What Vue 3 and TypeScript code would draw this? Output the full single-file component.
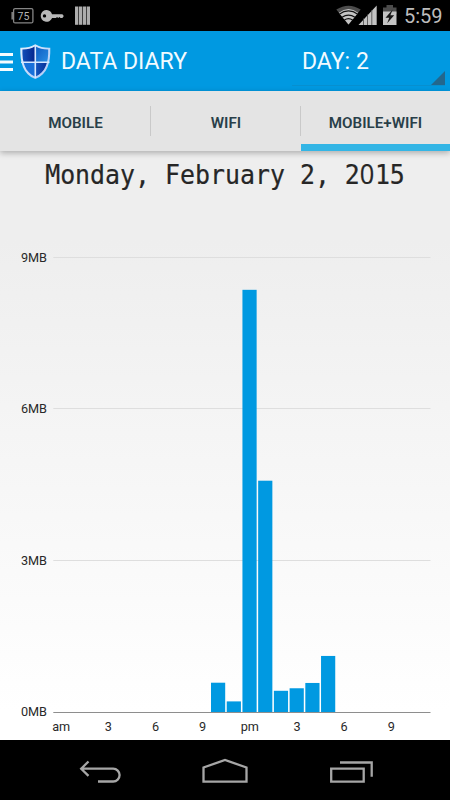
<script setup lang="ts">
interface Bar { hour: number; mb: number }

const tabs: string[] = ['MOBILE', 'WIFI', 'MOBILE+WIFI']
const activeTab = 'MOBILE+WIFI'

const bars: Bar[] = [
  { hour: 10, mb: 0.58 },
  { hour: 11, mb: 0.21 },
  { hour: 12, mb: 8.36 },
  { hour: 13, mb: 4.58 },
  { hour: 14, mb: 0.42 },
  { hour: 15, mb: 0.47 },
  { hour: 16, mb: 0.575 },
  { hour: 17, mb: 1.11 },
]
const hourLabels: string[] = ['am', '3', '6', '9', 'pm', '3', '6', '9']
const gridValues: number[] = [9, 6, 3, 0]

const left = 53.3
const hourWidth = 15.72
const base = 512
const yFor = (mb: number): number => base - mb * 50.5
const lineY = (mb: number): number => mb === 0 ? base + 0.5 : Math.ceil(yFor(mb)) - 0.5
</script>

<template>
  <div class="screen">
    <div class="status">
      <svg class="status-left" width="100" height="31" viewBox="0 0 100 31">
        <rect x="13.6" y="8.6" width="19.3" height="14.3" rx="1.5" fill="none" stroke="#858585" stroke-width="1.3" />
        <path d="M12.2 12v7.5" stroke="#858585" stroke-width="1.5" />
        <text x="23.5" y="20" class="percent">75</text>
        <path fill="#b8b8b8" fill-rule="evenodd" d="M46.8 10a5.9 5.9 0 1 0 5.3 8.1H56l1-1 1.2 1 1.2-1 1.2 1h1.8l1.4-2.1-1.4-1.8H52A5.9 5.9 0 0 0 46.8 10ZM44.5 14.2a1.7 1.7 0 1 1 0 3.4 1.7 1.7 0 0 1 0-3.4Z" />
        <g fill="#adadad">
          <rect x="75" y="6.5" width="3.3" height="18.3" /><rect x="78.9" y="6.5" width="3.3" height="18.3" />
          <rect x="82.8" y="6.5" width="3.3" height="18.3" /><rect x="86.7" y="6.5" width="3.3" height="18.3" />
        </g>
      </svg>
      <div class="status-right">
        <svg width="64" height="31" viewBox="336 0 64 31">
          <path d="M348.5 24.5 336.3 9.6Q348.5 1.8 360.7 9.6Z" fill="#4c4c4c" />
          <path d="M348.5 24.5 338.8 12.7Q348.5 5.5 358.2 12.7Z" fill="#c4c4c4" />
          <path d="M339.2 14.2Q348.5 7.7 357.8 14.2M342 17.3Q348.5 12.8 355 17.3M344.4 20.1Q348.5 17.3 352.6 20.1" fill="none" stroke="#111" stroke-width="1.2" />
          <path d="M358.5 25 376.7 5.5V25Z" fill="#c4c4c4" />
          <path d="M363.5 18.5V25M367.5 14.5V25M371.8 10V25" stroke="#555" stroke-width=".9" />
          <path d="M383 7.5h3.5V5h6.5v2.5h3.5V14H383Z" fill="#4c4c4c" />
          <path d="M383 11.5h13.5V25H383Z" fill="#c4c4c4" />
          <path d="m392.7 9.5-7.2 8.3h3.7l-2 5.5 7-8h-3.8Z" fill="#171717" />
        </svg>
        <span class="clock">5:59</span>
      </div>
    </div>

    <header class="action-bar">
      <svg width="55" height="60" viewBox="0 0 55 60">
        <path d="M0 23.5h13M0 31h13M0 38.5h13" stroke="#f5fcff" stroke-width="3" />
        <defs>
          <linearGradient id="rim" x1="0" y1="0" x2="1" y2="1">
            <stop offset="0" stop-color="#e3f2ff" /><stop offset="1" stop-color="#a9c5f5" />
          </linearGradient>
          <linearGradient id="navy" x1="0" y1="0" x2="1" y2="0">
            <stop offset="0" stop-color="#1456c0" /><stop offset="1" stop-color="#03248b" />
          </linearGradient>
          <linearGradient id="azure" x1="0" y1="0" x2="1" y2="1">
            <stop offset="0" stop-color="#0a55bd" /><stop offset="1" stop-color="#2a92e6" />
          </linearGradient>
          <clipPath id="shield">
            <path d="M35.3 15.2Q29.5 18.5 22.4 18.4C22.1 31 24.8 41 35.3 45.7 45.8 41 48.5 31 48.2 18.4Q41.1 18.5 35.3 15.2Z" />
          </clipPath>
        </defs>
        <path d="M35.3 13.2Q29 17 20.3 16.7C20 32 23 43 35.3 48 47.6 43 50.6 32 50.3 16.7Q41.6 17 35.3 13.2Z" fill="url(#rim)" />
        <g clip-path="url(#shield)">
          <rect x="20" y="12" width="15.3" height="19" fill="url(#navy)" />
          <rect x="35.3" y="12" width="15.3" height="19" fill="url(#azure)" />
          <rect x="20" y="31" width="15.3" height="18" fill="#1870da" />
          <rect x="35.3" y="31" width="15.3" height="18" fill="url(#navy)" />
        </g>
        <path d="M35.3 15v32M21 31.3h28.5" stroke="#d5e8ff" stroke-width="1.6" />
      </svg>
      <h1 class="title">DATA DIARY</h1>
      <div class="spinner">
        <span>DAY: 2</span>
        <svg class="corner" width="14" height="14" viewBox="0 0 14 14"><path d="M14 0V14H0Z" fill="#23678d" /></svg>
      </div>
    </header>

    <nav class="tabs">
      <div v-for="tab in tabs" :key="tab" class="tab" :class="{ active: tab === activeTab }">{{ tab }}</div>
    </nav>

    <main class="content">
      <h2 class="date">Monday, February 2, 2<span class="zero">0</span>15</h2>
      <svg class="chart" width="450" height="540" viewBox="0 0 450 540">
        <g v-for="v in gridValues" :key="v">
          <line :x1="left" x2="430.5" :y1="lineY(v)" :y2="lineY(v)" :stroke="v === 0 ? '#8e8e8e' : '#dedede'" />
          <text class="label value" x="47" :y="yFor(v) + 4">{{ v }}MB</text>
        </g>
        <rect v-for="bar in bars" :key="bar.hour" class="bar" :x="left + bar.hour * hourWidth + 0.5" :y="yFor(bar.mb)" width="14.2" :height="bar.mb * 50.5" />
        <text v-for="(label, i) in hourLabels" :key="i" class="label hour" :x="left + (i * 3 + 0.5) * hourWidth" y="530.5">{{ label }}</text>
      </svg>
    </main>

    <footer class="nav-bar">
      <svg width="450" height="60" viewBox="0 0 450 60" fill="none" stroke="#a6a6a6" stroke-width="2.3">
        <path d="M80.5 28.7h32.7a6.35 6.35 0 0 1 0 12.8H98M88.5 21.5l-7.3 7.2 7.3 7.2" />
        <path d="M203.5 41.7V27.5L225 20l21.5 7.5v14.2Z" />
        <path d="M331.2 28.7h32.5v13h-32.5ZM340 22.5h31.7v14.2" />
      </svg>
    </footer>
  </div>
</template>

<style>
body { margin: 0; background: #000; }
</style>

<style scoped>
.screen { width: 450px; height: 800px; display: flex; flex-direction: column; overflow: hidden; font-family: Roboto, sans-serif; background: #000; }
.status { flex: 0 0 31px; display: flex; justify-content: space-between; }
.percent { font: 10.5px Roboto, sans-serif; fill: #b5b5b5; text-anchor: middle; }
.status-right { display: flex; align-items: center; gap: 4px; padding-right: 7px; }
.clock { color: #bdbdbd; font-size: 20px; line-height: 29px; padding-top: 2px; width: 39px; white-space: nowrap; }
.action-bar { flex: 0 0 60px; display: flex; align-items: center; background: #0099e1; color: #f2fbff; }
.title { margin: 0 0 0 6px; padding-top: 2px; width: 231px; font-size: 23px; font-weight: 400; line-height: 58px; white-space: nowrap; }
.spinner { display: flex; width: 153px; height: 55px; align-self: flex-start; justify-content: space-between; align-items: flex-end; box-sizing: border-box; padding-left: 10px; border-bottom: 1px solid #078fcf; font-size: 23px; line-height: 47px; }
.spinner span { align-self: flex-start; padding-top: 7px; }
.corner { display: block; }
.tabs { flex: 0 0 60px; display: grid; grid-template-columns: 151px 150px 149px; background: #e4e4e4; box-shadow: 0 2px 6px rgba(0, 0, 0, .28); z-index: 1; }
.tab { display: flex; align-items: center; justify-content: center; box-sizing: border-box; color: #293f49; font-size: 15.2px; font-weight: 600; border-bottom: 7px solid transparent; padding-top: 10px; background: linear-gradient(#c9c9c9, #c9c9c9) no-repeat right 15px / 1px 30px; }
.tab:last-child { background: none; }
.tab.active { border-bottom-color: #33b5e5; }
.content { flex: 0 0 589px; display: flex; flex-direction: column; background: linear-gradient(#eee 0, #eee 15%, #fff 95%); }
.date { margin: 0; height: 49px; font: 400 24.9px/49px "DejaVu Sans Mono", monospace; text-align: center; color: #262626; white-space: pre; transform: scaleY(1.05); -webkit-text-stroke: .2px #262626; }
.zero { font-family: "Open Sans", sans-serif; font-size: 25.4px; line-height: 1; letter-spacing: .5px; }
.chart { display: block; }
.label { font: 12.7px Roboto, sans-serif; fill: #292929; }
.value { text-anchor: end; }
.hour { text-anchor: middle; }
.bar { fill: #0099e1; }
.nav-bar { flex: 0 0 60px; }
</style>
